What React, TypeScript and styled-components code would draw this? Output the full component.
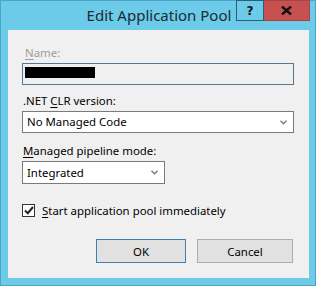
import React from "react";
import styled, { createGlobalStyle } from "styled-components";

const GlobalStyle = createGlobalStyle`
  body {
    margin: 0;
    background: #ffffff;
    font-family: "Noto Sans", "Liberation Sans", sans-serif;
  }
`;

const Window = styled.div`
  box-sizing: border-box;
  width: 316px;
  height: 286px;
  background: #6bcbe8;
  border: 1px solid #4aa5c8;
  display: flex;
  flex-direction: column;
  padding: 0 6px 7px 7px;
`;

const TitleBar = styled.div`
  height: 29px;
  display: grid;
  grid-template-columns: 1fr auto 1fr;
  align-items: start;
  margin-right: -1px;
`;

const Title = styled.div`
  grid-column: 2;
  font-size: 15px;
  line-height: 28px;
  color: #1b2b33;
  white-space: nowrap;
`;

const Controls = styled.div`
  grid-column: 3;
  justify-self: end;
  display: flex;
  margin-top: -1px;
`;

const CaptionButton = styled.div<{ $close?: boolean }>`
  box-sizing: border-box;
  width: ${({ $close }) => ($close ? "46px" : "28px")};
  height: 21px;
  display: flex;
  align-items: center;
  justify-content: center;
  background: ${({ $close }) => ($close ? "#c75050" : "#6bcbe8")};
  border: 1px solid ${({ $close }) => ($close ? "#a94444" : "#2f5f72")};
  border-left-width: ${({ $close }) => ($close ? "0" : "1px")};
  font-family: "DejaVu Sans", sans-serif;
  font-weight: bold;
  font-size: 12px;
  color: #111;
`;

const Client = styled.div`
  flex: 1;
  background: #f0f0f0;
  padding: 15px 15px 0 14px;
  display: flex;
  flex-direction: column;
  font-size: 11.4px;
  color: #000;
`;

const Label = styled.div<{ $disabled?: boolean; $gap?: number }>`
  height: 16px;
  line-height: 16px;
  margin-top: ${({ $gap }) => $gap ?? 0}px;
  margin-bottom: 2px;
  padding-left: ${({ $disabled }) => ($disabled ? "3px" : "1px")};
  color: ${({ $disabled }) => ($disabled ? "#9d9d9d" : "#000")};
  u {
    text-decoration-thickness: 1px;
    text-underline-offset: 2px;
  }
`;

const TextBox = styled.div`
  box-sizing: border-box;
  height: 22px;
  border: 1px solid #56788e;
  background: #f0f0f0;
  display: flex;
  align-items: center;
  padding-left: 2px;
`;

const Redacted = styled.span`
  display: inline-block;
  width: 70px;
  height: 11px;
  background: #000;
  margin-top: -3px;
`;

const Select = styled.div<{ $width?: string; $height?: number }>`
  box-sizing: border-box;
  width: ${({ $width }) => $width ?? "100%"};
  height: ${({ $height }) => $height ?? 22}px;
  border: 1px solid #7a7a7a;
  background: #fff;
  display: flex;
  align-items: center;
  justify-content: space-between;
  padding: 0 6px 0 4px;
  line-height: 16px;
`;

const Chevron = () => (
  <svg width="7" height="5" viewBox="0 0 7 5">
    <polyline points="0.5,0.8 3.5,3.8 6.5,0.8" fill="none" stroke="#7a7a7a" strokeWidth="1.4" />
  </svg>
);

const CheckRow = styled.label`
  display: flex;
  align-items: center;
  gap: 7px;
  margin-top: 18px;
  height: 16px;
  u {
    text-decoration-thickness: 1px;
    text-underline-offset: 2px;
  }
`;

const CheckBox = styled.span`
  box-sizing: border-box;
  width: 13px;
  height: 13px;
  border: 1px solid #333;
  background: #fff;
  display: flex;
  align-items: center;
  justify-content: center;
`;

const ButtonRow = styled.div`
  display: flex;
  justify-content: flex-end;
  gap: 11px;
  margin-top: 21px;
  padding-right: 1px;
`;

const Button = styled.div<{ $default?: boolean; $width: number }>`
  box-sizing: border-box;
  width: ${({ $width }) => $width}px;
  height: 24px;
  border: 1px solid ${({ $default }) => ($default ? "#3c7fb1" : "#adadad")};
  background: #e1e1e1;
  display: flex;
  align-items: center;
  justify-content: center;
`;

export default function App() {
  return (
    <>
      <GlobalStyle />
      <Window>
        <TitleBar>
          <Title>Edit Application Pool</Title>
          <Controls>
            <CaptionButton>?</CaptionButton>
            <CaptionButton $close>
              <svg width="11" height="9" viewBox="0 0 11 9">
                <path d="M1 0.5 L10 8.5 M10 0.5 L1 8.5" stroke="#111" strokeWidth="2.4" />
              </svg>
            </CaptionButton>
          </Controls>
        </TitleBar>
        <Client>
          <Label $disabled>
            <u>N</u>ame:
          </Label>
          <TextBox>
            <Redacted />
          </TextBox>
          <Label $gap={8}>
            .NET <u>C</u>LR version:
          </Label>
          <Select>
            No Managed Code
            <Chevron />
          </Select>
          <Label $gap={10}>
            <u>M</u>anaged pipeline mode:
          </Label>
          <Select $width="143px" $height={23}>
            Integrated
            <Chevron />
          </Select>
          <CheckRow>
            <CheckBox>
              <svg width="10" height="9" viewBox="0 0 10 9">
                <polyline points="1,4.5 3.8,7.2 9,1" fill="none" stroke="#222" strokeWidth="2" />
              </svg>
            </CheckBox>
            <span>
              <u>S</u>tart application pool immediately
            </span>
          </CheckRow>
          <ButtonRow>
            <Button $default $width={90}>OK</Button>
            <Button $width={96}>Cancel</Button>
          </ButtonRow>
        </Client>
      </Window>
    </>
  );
}
